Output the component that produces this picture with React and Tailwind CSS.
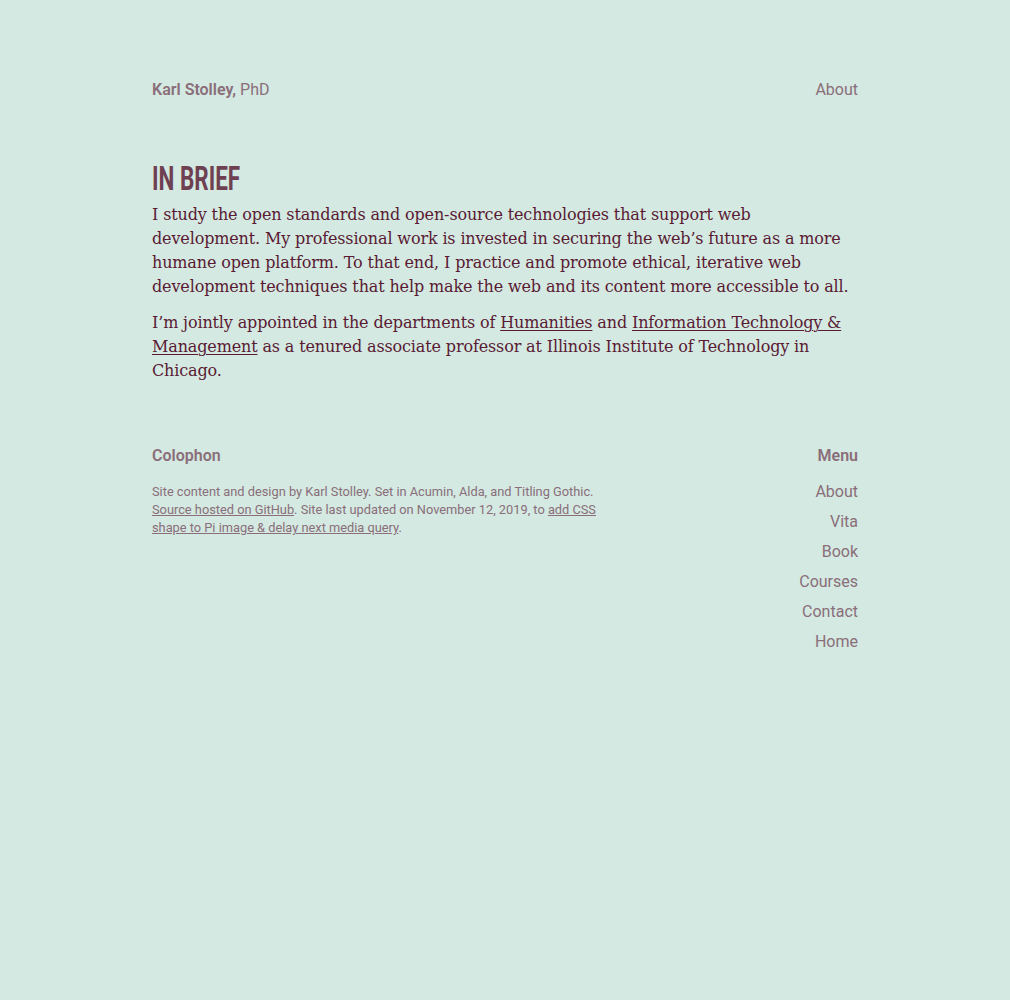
import React from 'react';

const menu = ['About', 'Vita', 'Book', 'Courses', 'Contact', 'Home'];

export default function App() {
  return (
    <div className="min-h-[1000px] bg-[#d3e9e1] font-['Roboto',sans-serif] text-[#8a6e7a]">
      <div className="mx-auto w-[706px] pt-[79px]">
        {/* header */}
        <header className="flex items-center justify-between text-[16px] leading-[22px]">
          <div>
            <span className="font-semibold">Karl Stolley,</span> PhD
          </div>
          <a className="text-[#8a6e7a]">About</a>
        </header>

        {/* main */}
        <main className="mt-[60px]">
          <h1 className="h-[36px] font-['Roboto',sans-serif] text-[33px] font-bold leading-[36px] text-[#6f3f52]">
            <span className="inline-block origin-left scale-x-[0.68]">IN BRIEF</span>
          </h1>
          <div className="mt-[6px] font-['DejaVu_Serif',serif] text-[16px] leading-[24px] tracking-[-0.14px] text-[#5a1a33]">
            <p>
              I study the open standards and open-source technologies that support web development. My
              professional work is invested in securing the web’s future as a more humane open platform.
              To that end, I practice and promote ethical, iterative web development techniques that help
              make the web and its content more accessible to all.
            </p>
            <p className="mt-[12px]">
              I’m jointly appointed in the departments of <a className="underline decoration-1 underline-offset-2">Humanities</a> and{' '}
              <a className="underline decoration-1 underline-offset-2">Information Technology &amp; Management</a> as a tenured
              associate professor at Illinois Institute of Technology in Chicago.
            </p>
          </div>
        </main>

        {/* footer */}
        <footer className="mt-[62px] flex justify-between">
          <div className="w-[455px]">
            <h2 className="text-[16px] font-semibold leading-[22px]">Colophon</h2>
            <p className="mt-[16px] text-[12.8px] leading-[18px]">
              Site content and design by Karl Stolley. Set in Acumin, Alda, and Titling Gothic.{' '}
              <a className="underline">Source hosted on GitHub</a>. Site last updated on November 12, 2019, to{' '}
              <a className="underline">add CSS shape to Pi image &amp; delay next media query</a>.
            </p>
          </div>
          <nav className="text-right">
            <h2 className="text-[16px] font-semibold leading-[22px]">Menu</h2>
            <ul className="mt-[14px] flex flex-col gap-[8px] text-[16px] leading-[22px]">
              {menu.map((m) => (
                <li key={m}>
                  <a>{m}</a>
                </li>
              ))}
            </ul>
          </nav>
        </footer>
      </div>
    </div>
  );
}
